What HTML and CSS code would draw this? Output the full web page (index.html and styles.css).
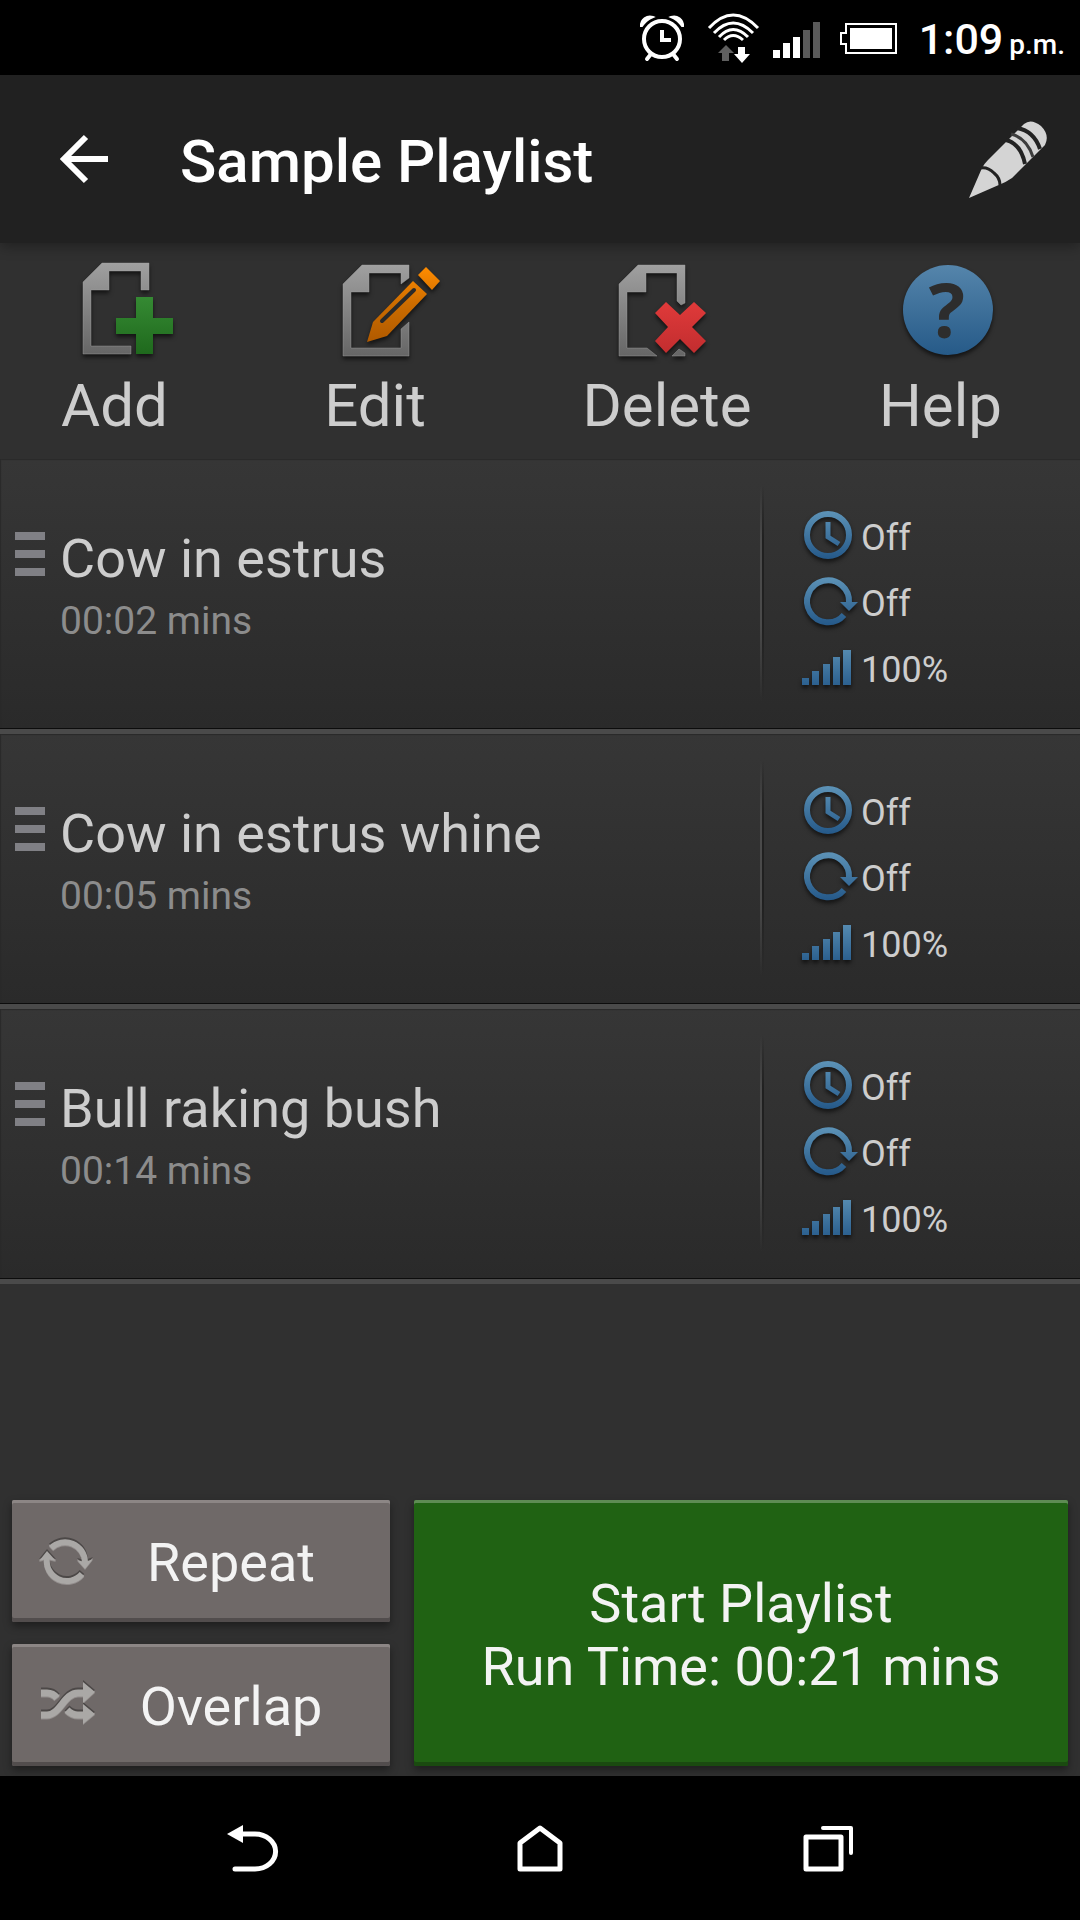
FILE: index.html
```html
<!DOCTYPE html>
<html lang="en">
<head>
    <meta charset="UTF-8">
    <meta name="viewport" content="width=device-width, initial-scale=1.0">
    <title>Sample Playlist</title>
    <link rel="stylesheet" href="styles.css">
</head>
<body>
    <!-- shared gradients and row icons -->
    <svg class="defs" width="0" height="0" aria-hidden="true">
        <defs>
            <linearGradient id="gray" x1="0" y1="0" x2="0" y2="1">
                <stop offset="0" stop-color="#a0a0a0"/>
                <stop offset="1" stop-color="#666"/>
            </linearGradient>
            <linearGradient id="green" x1="0" y1="0" x2="0" y2="1">
                <stop offset="0" stop-color="#358a33"/>
                <stop offset="1" stop-color="#1f691d"/>
            </linearGradient>
            <linearGradient id="orange" gradientUnits="userSpaceOnUse" x1="0" y1="12" x2="0" y2="87">
                <stop offset="0" stop-color="#ff8c00"/>
                <stop offset="0.5" stop-color="#cc6c00"/>
                <stop offset="1" stop-color="#b05a00"/>
            </linearGradient>
            <linearGradient id="red" x1="0" y1="0" x2="0" y2="1">
                <stop offset="0" stop-color="#e03a3a"/>
                <stop offset="1" stop-color="#c22d2f"/>
            </linearGradient>
            <linearGradient id="blue" gradientUnits="userSpaceOnUse" x1="0" y1="5" x2="0" y2="53">
                <stop offset="0" stop-color="#5e94b8"/>
                <stop offset="1" stop-color="#265a8a"/>
            </linearGradient>
            <linearGradient id="help-blue" x1="0" y1="0" x2="0" y2="1">
                <stop offset="0" stop-color="#5585ab"/>
                <stop offset="1" stop-color="#265a88"/>
            </linearGradient>
        </defs>
        <symbol id="clock" viewBox="0 0 60 66">
            <circle cx="27" cy="30" r="21" fill="none" stroke="url(#blue)" stroke-width="6"/>
            <path d="M27 17V32L38 39" fill="none" stroke="url(#blue)" stroke-width="5"/>
        </symbol>
        <symbol id="loop" viewBox="0 0 60 66">
            <path d="M48 32A21 21 0 1 0 43 44" fill="none" stroke="url(#blue)" stroke-width="6"/>
            <path d="M39 31H57L48 40Z" fill="url(#blue)"/>
        </symbol>
        <symbol id="volume" viewBox="0 0 60 66">
            <path d="M1 41H8V48H1ZM11 34H18V48H11ZM22 27H29V48H22ZM32 20H39V48H32ZM42 13H50V48H42Z" fill="url(#blue)"/>
        </symbol>
    </svg>

    <div class="status-bar">
        <svg width="55" height="48" viewBox="0 0 55 48" aria-hidden="true">
            <circle cx="23" cy="26" r="18" fill="none" stroke="#fff" stroke-width="4"/>
            <path d="M23 17V27H32" fill="none" stroke="#fff" stroke-width="4"/>
            <path d="M2 13A9 9 0 0 1 14 4Q7 7 3 13ZM44 13A9 9 0 0 0 32 4Q39 7 43 13Z" fill="#fff" stroke="#fff" stroke-width="2"/>
            <path d="M12 41L8 46M34 41L38 46" stroke="#fff" stroke-width="4" stroke-linecap="round"/>
        </svg>
        <svg width="51" height="50" viewBox="0 0 51 50" aria-hidden="true">
            <g fill="none" stroke="#fff" stroke-width="3">
                <path d="M1 15Q25 -11 50 15"/>
                <path d="M6 20Q25 0 45 20"/>
                <path d="M11 24Q25 9 40 24"/>
                <path d="M16 27Q25 18 35 27"/>
            </g>
            <path d="M18 32L26 40H21V48H14V40H10Z" fill="#5f5f5f"/>
            <path d="M30 34H37V41H42L34 50L26 41H30Z" fill="#fff"/>
        </svg>
        <svg width="53" height="48" viewBox="0 0 53 48" aria-hidden="true">
            <path d="M0 37H7V45H0ZM10 30H17V45H10ZM20 24H27V45H20Z" fill="#fff"/>
            <path d="M30 17H37V45H30ZM40 9H47V45H40Z" fill="#5a5a5a"/>
        </svg>
        <svg width="65" height="48" viewBox="0 0 65 48" aria-hidden="true">
            <path d="M6 11H56V40H6V31H1V20H6Z" fill="none" stroke="#fff" stroke-width="2"/>
            <path d="M10 15H52V36H10Z" fill="#fff"/>
        </svg>
        <div class="time">1:09 <small>p.m.</small></div>
    </div>

    <header class="app-bar">
        <button class="icon-button" aria-label="Back">
            <svg width="48" height="48" viewBox="0 0 48 48" aria-hidden="true">
                <path d="M26 2L4 24L26 46M4 24H48" fill="none" stroke="#fff" stroke-width="6"/>
            </svg>
        </button>
        <h1>Sample Playlist</h1>
        <button class="icon-button" aria-label="Rename playlist">
            <svg width="80" height="80" viewBox="0 0 80 80" aria-hidden="true">
                <path d="M1 79L14 49Q16 45 20 41L56 5Q63 -1 73 7Q82 16 77 26L44 59Q38 63 33 65Z" fill="#d4d4d4"/>
                <path d="M13 49Q20 48 26 54Q32 59 32 66" fill="none" stroke="#222" stroke-width="3"/>
                <path d="M38 21Q53 25 57 45M49 9Q66 12 72 30" fill="none" stroke="#222" stroke-width="4"/>
                <path d="M43 15Q59 19 65 38" fill="none" stroke="#3c3c3c" stroke-width="3"/>
            </svg>
        </button>
    </header>

    <nav class="toolbar">
        <button class="tool">
            <svg width="120" height="105" viewBox="0 0 120 105" aria-hidden="true">
                <path d="M47 8H94V35H86V16H54V35H36V91H76V99H28V27Z" fill="url(#gray)" stroke="#a8a8a8" stroke-opacity="0.4"/>
                <path d="M81 42H98V63H118V79H98V99H81V79H61V63H81Z" fill="url(#green)"/>
            </svg>
            Add
        </button>
        <button class="tool">
            <svg width="120" height="105" viewBox="-1 0 120 105" aria-hidden="true">
                <path d="M46 10H93V23L85 29V18H53V37H35V93H85V74L93 67V101H27V29Z" fill="url(#gray)" stroke="#a8a8a8" stroke-opacity="0.4"/>
                <path d="M51 87L57 67L97 26L111 39L71 81Z" fill="url(#orange)"/>
                <path d="M110 12L124 26L116 35L102 20Z" fill="url(#orange)"/>
                <path d="M66 66L98 35" stroke="#2a2a2a" stroke-width="4" stroke-linecap="round"/>
            </svg>
            Edit
        </button>
        <button class="tool">
            <svg width="120" height="105" viewBox="-2 0 120 105" aria-hidden="true">
                <path d="M29 10H76V48L72 50L68 46V18H37V37H18V93H38L48 101H10V29ZM63 101L70 94L76 98V101Z" fill="url(#gray)" stroke="#a8a8a8" stroke-opacity="0.4"/>
                <path d="M46 58L57 47L71 60L85 47L97 58L83 72L97 86L85 98L71 84L57 98L46 86L59 72Z" fill="url(#red)"/>
            </svg>
            Delete
        </button>
        <button class="tool">
            <svg width="120" height="105" viewBox="0 0 120 105" aria-hidden="true">
                <circle cx="67" cy="55" r="45" fill="url(#help-blue)"/>
                <text class="question" x="66" y="83">?</text>
            </svg>
            Help
        </button>
    </nav>

    <main>
        <ul class="playlist">
            <li class="track">
                <span class="handle"></span>
                <div class="info">
                    <h2>Cow in estrus</h2>
                    <p>00:02 mins</p>
                </div>
                <div class="stats">
                    <div class="stat"><svg><use href="#clock"/></svg>Off</div>
                    <div class="stat"><svg><use href="#loop"/></svg>Off</div>
                    <div class="stat"><svg><use href="#volume"/></svg>100%</div>
                </div>
            </li>
            <li class="track">
                <span class="handle"></span>
                <div class="info">
                    <h2>Cow in estrus whine</h2>
                    <p>00:05 mins</p>
                </div>
                <div class="stats">
                    <div class="stat"><svg><use href="#clock"/></svg>Off</div>
                    <div class="stat"><svg><use href="#loop"/></svg>Off</div>
                    <div class="stat"><svg><use href="#volume"/></svg>100%</div>
                </div>
            </li>
            <li class="track">
                <span class="handle"></span>
                <div class="info">
                    <h2>Bull raking bush</h2>
                    <p>00:14 mins</p>
                </div>
                <div class="stats">
                    <div class="stat"><svg><use href="#clock"/></svg>Off</div>
                    <div class="stat"><svg><use href="#loop"/></svg>Off</div>
                    <div class="stat"><svg><use href="#volume"/></svg>100%</div>
                </div>
            </li>
        </ul>
    </main>

    <div class="controls">
        <button class="btn toggle">
            <svg width="66" height="66" viewBox="0 0 66 66" aria-hidden="true">
                <path d="M17 20A20 20 0 0 1 51 34M48 46A20 20 0 0 1 13 30" fill="none" stroke-width="6"/>
                <path d="M43 32L51 34L59 31L51 41ZM5 33L13 23L22 33L13 31Z" stroke="none" fill="#aaa8a6"/>
            </svg>
            <span>Repeat</span>
        </button>
        <button class="btn toggle">
            <svg width="66" height="66" viewBox="0 0 66 66" aria-hidden="true">
                <path d="M7 21H13Q19 21 23 26M33 38Q38 43 44 43H50M7 43H13C26 43 30 21 44 21H50" fill="none" stroke-width="7"/>
                <path d="M49 10L61 20L49 31ZM49 32L61 42L49 52Z" stroke="none" fill="#aaa8a6"/>
            </svg>
            <span>Overlap</span>
        </button>
        <button class="btn start">Start Playlist<br>Run Time: 00:21 mins</button>
    </div>

    <nav class="nav-bar">
        <button class="icon-button" aria-label="Back">
            <svg width="50" height="48" viewBox="0 0 50 48" aria-hidden="true">
                <path d="M14 10H28A20 17 0 0 1 28 45H8" fill="none" stroke="#fff" stroke-width="5" stroke-linecap="round"/>
                <path d="M0 10L16 1V19Z" fill="#fff"/>
            </svg>
        </button>
        <button class="icon-button" aria-label="Home">
            <svg width="50" height="48" viewBox="0 0 50 48" aria-hidden="true">
                <path d="M5 19L25 4L45 19V45H5Z" fill="none" stroke="#fff" stroke-width="5" stroke-linejoin="round"/>
            </svg>
        </button>
        <button class="icon-button" aria-label="Recent apps">
            <svg width="50" height="48" viewBox="0 0 50 48" aria-hidden="true">
                <path d="M3 13H38V45H3Z" fill="none" stroke="#fff" stroke-width="5" stroke-linejoin="round"/>
                <path d="M20 4H48V29" fill="none" stroke="#fff" stroke-width="4" stroke-linecap="round" stroke-linejoin="round"/>
            </svg>
        </button>
    </nav>
</body>
</html>
```
FILE: styles.css
```css
* {
    box-sizing: border-box;
}
body {
    margin: 0;
    min-height: 100vh;
    display: flex;
    flex-direction: column;
    background: #303030;
    color: #cdcdcd;
    font-family: Roboto, "Liberation Sans", sans-serif;
}
.defs {
    position: absolute;
}
h1, h2, p, ul {
    margin: 0;
    padding: 0;
}
button {
    border: none;
    padding: 0;
    background: none;
    color: inherit;
    font: inherit;
    cursor: pointer;
}
svg {
    display: block;
    flex: none;
    overflow: visible;
}
.status-bar {
    height: 75px;
    padding: 13px 15px 0 0;
    display: flex;
    justify-content: flex-end;
    gap: 14px;
    background: #000;
    color: #fff;
}
.time {
    display: flex;
    align-items: baseline;
    gap: 6px;
    font-size: 43px;
    font-weight: 500;
    line-height: 52px;
}
.time small {
    font-size: 28px;
}
.app-bar {
    height: 168px;
    padding: 0 32px 0 60px;
    display: flex;
    align-items: center;
    background: #212121;
    color: #fff;
    box-shadow: 0 4px 12px rgba(0, 0, 0, 0.3);
    z-index: 1;
}
.app-bar h1 {
    flex: 1;
    padding: 4px 0 0 72px;
    font-size: 60px;
    font-weight: 500;
}
.toolbar {
    height: 216px;
    padding: 12px 12px 0 0;
    display: grid;
    grid-template-columns: 229fr 292fr 292fr 255fr;
}
.tool {
    display: flex;
    flex-direction: column;
    align-items: center;
    font-size: 60px;
    line-height: 92px;
}
.tool svg,
.stat svg {
    filter: drop-shadow(0 3px 2px rgba(0, 0, 0, 0.6));
}
.question {
    font-family: "Open Sans", sans-serif;
    font-size: 76px;
    line-height: 76px;
    font-weight: 700;
    text-anchor: middle;
    fill: #2d2d2d;
}
.playlist {
    list-style: none;
}
.track {
    height: 275px;
    display: flex;
    background: linear-gradient(#363636, #2a2a2a);
    border-bottom: 5px solid #4a4a4a;
    box-shadow: inset 0 -1px #0c0c0c, inset 1px 1px 1px #2a2a2a;
}
.handle {
    width: 30px;
    height: 44px;
    margin: 73px 15px 0;
    background: repeating-linear-gradient(#808085 0 8px, transparent 8px 18px);
}
.info {
    flex: 1;
    padding-top: 67px;
}
.info h2 {
    font-size: 54px;
    font-weight: 400;
    line-height: 66px;
}
.info p {
    font-size: 39px;
    line-height: 58px;
    color: #8c8c8c;
}
.stats {
    width: 320px;
    padding: 46px 0 0 41px;
    background:
        linear-gradient(transparent, #4a4a4a 25%, #4a4a4a 65%, transparent) 0 26px / 2px 216px no-repeat,
        linear-gradient(transparent, #202020 25%, #202020 65%, transparent) 2px 26px / 2px 216px no-repeat;
}
.stat {
    display: flex;
    font-size: 36px;
    line-height: 66px;
}
.stat svg {
    width: 60px;
    height: 66px;
}
.controls {
    margin-top: auto;
    padding: 0 12px 10px;
    display: grid;
    grid-template-columns: 378fr 654fr;
    grid-template-rows: 122px 122px;
    grid-auto-flow: column;
    gap: 22px 24px;
}
.btn {
    padding-top: 4px;
    border-radius: 2px;
    color: #f3f3f3;
    font-size: 54px;
    line-height: 63px;
}
.toggle {
    padding: 0 28px 0 22px;
    display: flex;
    align-items: center;
    background: #6f6968;
    box-shadow: inset 0 3px #8c8685, inset 0 -4px #524d4d, 0 4px 8px rgba(0, 0, 0, 0.4);
}
.toggle svg {
    stroke: #aaa8a6;
    filter: drop-shadow(0 -2px #4c4847) drop-shadow(0 1px #918c8b);
}
.toggle span {
    flex: 1;
    padding-top: 2px;
}
.start {
    grid-column: 2;
    grid-row: 1 / 3;
    background: #206213;
    box-shadow: inset 0 3px #5e8c54, inset 0 -4px #1a4a10, 0 4px 8px rgba(0, 0, 0, 0.4);
}
.nav-bar {
    height: 144px;
    padding: 0 10%;
    display: grid;
    grid-template-columns: repeat(3, 1fr);
    place-items: center;
    background: #000;
}
```
